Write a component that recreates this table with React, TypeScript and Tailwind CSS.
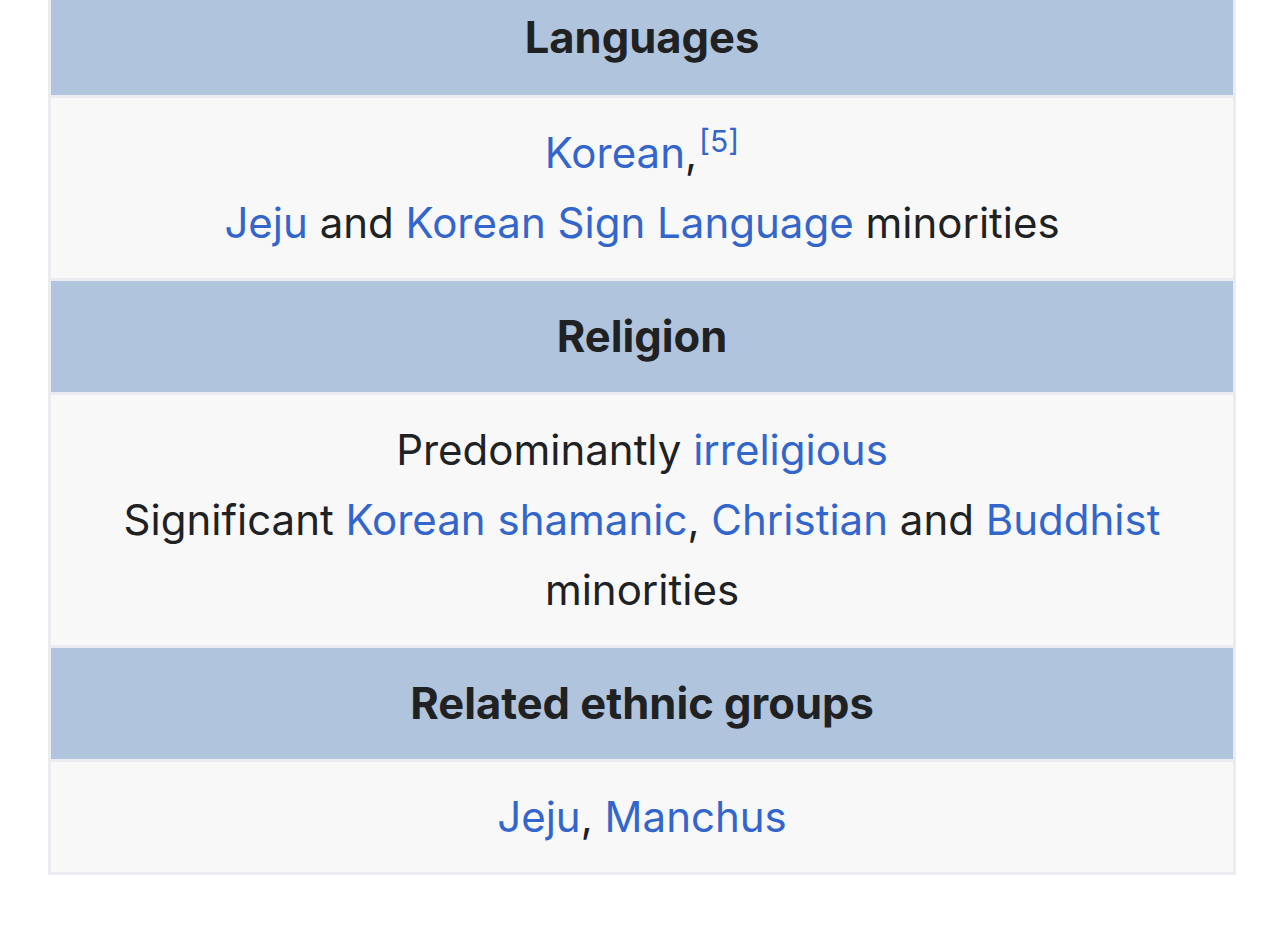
import React from 'react';

const A: React.FC<{ children: React.ReactNode }> = ({ children }) => (
  <a href="#" className="text-[#3366cc] no-underline">{children}</a>
);

const Header: React.FC<{ children: React.ReactNode; first?: boolean }> = ({ children, first }) => (
  <div
    className={`bg-[#b0c4de] text-center font-bold text-[43.5px] text-[#202122] leading-[70px] ${
      first ? 'pt-[2px] h-[95px]' : 'py-[20px] h-[111px]'
    }`}
  >
    {children}
  </div>
);

const Cell: React.FC<{ children: React.ReactNode }> = ({ children }) => (
  <div className="bg-[#f8f8f9] text-center text-[#202122] leading-[70px] py-[20px]">{children}</div>
);

export default function App() {
  return (
    <div className="min-h-[932px] bg-white" style={{ fontFamily: 'Inter, "Noto Sans", sans-serif' }}>
      <div className="ml-[48px] w-[1188px] bg-[#eaecf0] px-[3px] pb-[3px] flex flex-col gap-[3px] text-[42px]">
        <Header first>Languages</Header>
        <Cell>
          <div>
            <A>Korean</A>,<sup className="text-[30px] relative -top-[16px] align-baseline ml-[2px]"><A>[5]</A></sup>
          </div>
          <div>
            <A>Jeju</A> and <A>Korean Sign Language</A> minorities
          </div>
        </Cell>
        <Header>Religion</Header>
        <Cell>
          <div>
            Predominantly <A>irreligious</A>
          </div>
          <div className="px-[60px]">
            Significant <A>Korean shamanic</A>, <A>Christian</A> and <A>Buddhist</A> minorities
          </div>
        </Cell>
        <Header>Related ethnic groups</Header>
        <Cell>
          <div>
            <A>Jeju</A>, <A>Manchus</A>
          </div>
        </Cell>
      </div>
    </div>
  );
}
